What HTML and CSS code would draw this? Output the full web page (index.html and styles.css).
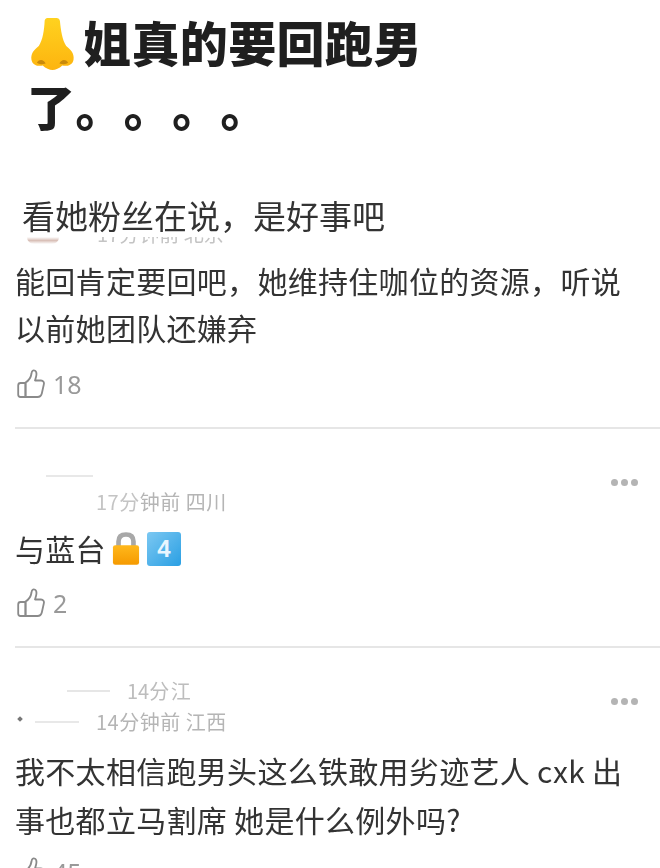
FILE: index.html
```html
<!DOCTYPE html>
<html lang="zh">
<head>
<meta charset="utf-8">
<title>评论截图</title>
<link rel="stylesheet" href="styles.css">
</head>
<body>
<svg class="defs" width="0" height="0" aria-hidden="true">
  <defs>
    <symbol id="thumb" viewBox="0 0 28 30">
      <path d="M8.5 13.5 C12 11.5 14 8 14.5 4.5 C14.8 1.8 16 1 17.5 1.5 C19.5 2.2 19.8 5 19 8 L18 11.5 H24 C26.3 11.5 27.4 13.2 26.8 15.5 L24.8 24.5 C24.2 27 22.8 28 20.5 28 H8.5 Z" fill="none" stroke="#8a8a8a" stroke-width="1.8" stroke-linejoin="round"/>
      <path d="M8.5 14 H3.5 C2 14 1.2 15 1.2 16.5 V25.5 C1.2 27 2 28 3.5 28 H8.5 Z" fill="none" stroke="#8a8a8a" stroke-width="1.8" stroke-linejoin="round"/>
    </symbol>
  </defs>
</svg>
<main class="page">
  <header class="post">
    <h1 class="title">
      <span class="title-line">
        <svg class="nose" viewBox="0 0 46 54" aria-hidden="true">
          <defs>
            <linearGradient id="noseFill" x1="0" y1="0" x2="0" y2="1">
              <stop offset="0" stop-color="#ffd21f"/>
              <stop offset="1" stop-color="#fdb40f"/>
            </linearGradient>
          </defs>
          <path d="M15 3 C15.5 1 17 0.5 18.5 0.5 H27 C29 0.5 30.3 1.5 30.6 3.5 C31.5 13 33 23 37 29 C42 33 45.5 37 44.5 43 C43.5 49 37 50 33 49 C30 52 26 53.5 23 53.5 C20 53.5 16 52 13 49 C9 50 2.5 49 1.5 43 C0.5 37 4 33 9 29 C13 23 14.5 13 15 3 Z" fill="url(#noseFill)"/>
          <path d="M7 46 C10 42 14 43 16 47 C12 48 9 48 7 46 Z M39 46 C36 42 32 43 30 47 C34 48 37 48 39 46 Z" fill="#c98a0c"/>
        </svg>
        <span>姐真的要回跑男</span>
      </span>
      <span class="title-line second">了。。。。</span>
    </h1>
    <p class="subtitle">看她粉丝在说&#xFF0C;是好事吧</p>
  </header>

  <section class="comment first">
    <div class="clipped">
      <span class="avatar-scrap"></span>
      <span class="clipped-meta">17分钟前 北京</span>
    </div>
    <p class="body">能回肯定要回吧&#xFF0C;她维持住咖位的资源&#xFF0C;听说<br>以前她团队还嫌弃</p>
    <div class="likes"><svg class="thumb"><use href="#thumb"/></svg><span>18</span></div>
  </section>

  <section class="comment second-comment">
    <div class="head">
      <span class="name-line"></span>
      <span class="menu"><i></i><i></i><i></i></span>
    </div>
    <div class="meta meta-sichuan"><span class="smudge">17分</span>钟前 四川</div>
    <p class="body short">与蓝台<svg class="lock" viewBox="0 0 30 36" aria-hidden="true">
        <defs>
          <linearGradient id="lockFill" x1="0" y1="0" x2="0" y2="1">
            <stop offset="0" stop-color="#ffb81c"/>
            <stop offset="1" stop-color="#f59a00"/>
          </linearGradient>
        </defs>
        <path d="M7 16 V10 C7 4.5 10 2.5 15 2.5 C20 2.5 23 4.5 23 10 V16" fill="none" stroke="#a8a8a8" stroke-width="5"/>
        <rect x="1" y="14" width="28" height="21" rx="2.5" fill="url(#lockFill)"/>
      </svg><span class="keycap">4</span></p>
    <div class="likes"><svg class="thumb"><use href="#thumb"/></svg><span>2</span></div>
  </section>

  <section class="comment third-comment">
    <div class="ghost-row">
      <span class="name-line ghost-line"></span>
      <span class="ghost-meta">14分 江</span>
      <span class="menu"><i></i><i></i><i></i></span>
    </div>
    <div class="meta-row">
      <span class="tick"></span>
      <span class="name-line meta-line"></span>
      <span class="meta">14分钟前 江西</span>
    </div>
    <p class="body">我不太相信跑男头这么铁敢用劣迹艺人 cxk 出<br>事也都立马割席 她是什么例外吗?</p>
    <div class="likes"><svg class="thumb"><use href="#thumb"/></svg><span>45</span></div>
  </section>
</main>
</body>
</html>
```

FILE: styles.css
```css
* {
  box-sizing: border-box;
}

html,
body {
  margin: 0;
  height: 868px;
  overflow: hidden;
  background: #fff;
}

.defs {
  position: absolute;
}

.page {
  height: 868px;
  overflow: hidden;
  font-family: "Noto Sans CJK SC", "Noto Sans", sans-serif;
  color: #333;
  text-spacing-trim: space-all;
  filter: blur(0.45px);
}

.post {
  padding: 9px 0 0 27px;
  height: 234px;
}

.title {
  margin: 0;
  font-size: 48px;
  line-height: 64px;
  font-weight: 900;
  letter-spacing: 0.4px;
  color: #1f1f1f;
}

.title-line {
  display: flex;
  align-items: center;
  white-space: nowrap;
}

.nose {
  width: 45px;
  height: 54px;
  margin: 6px 8px 0 3px;
  flex: none;
}

.second {
  margin-top: 0;
}

.subtitle {
  margin: 60px 0 0 -5px;
  font-size: 33px;
  line-height: 36px;
  font-weight: 400;
  color: #333;
}

.comment {
  margin-left: 15px;
  border-bottom: 2px solid #e6e6e6;
}

.first {
  height: 195px;
  padding-top: 3px;
}

.clipped {
  height: 7px;
  overflow: hidden;
  display: flex;
  align-items: flex-start;
}

.avatar-scrap {
  width: 32px;
  height: 7px;
  margin: 0 38px 0 12px;
  border-radius: 0 0 16px 16px;
  background: linear-gradient(#fff 0, #d9c0b8 50%, #fff 100%);
}

.clipped-meta {
  font-size: 20px;
  line-height: 20px;
  margin-top: -13px;
  color: #c4c4c4;
}

.body {
  margin: 0;
  font-size: 30px;
  line-height: 47px;
  letter-spacing: 0.3px;
  color: #333;
  white-space: nowrap;
}

.first .body {
  margin-top: 13px;
}

.short {
  display: flex;
  align-items: center;
  height: 47px;
}

.lock {
  width: 28px;
  height: 34px;
  margin: 0 7px 0 6px;
  flex: none;
}

.keycap {
  width: 34px;
  height: 34px;
  flex: none;
  border-radius: 3px;
  background: linear-gradient(135deg, #7cc8f2, #2a9fe3);
  color: #e8f6ff;
  font-family: "Liberation Sans", sans-serif;
  font-size: 24px;
  line-height: 34px;
  letter-spacing: 0;
  text-align: center;
  font-weight: 700;
}

.likes {
  display: flex;
  align-items: center;
  gap: 8px;
  margin: 18px 0 0 2px;
  height: 30px;
  font-family: "Noto Sans", sans-serif;
  font-size: 25px;
  line-height: 30px;
  color: #999;
}

.thumb {
  width: 28px;
  height: 30px;
  flex: none;
}

.second-comment {
  height: 219px;
  position: relative;
}

.head {
  height: 64px;
  padding-top: 44px;
  display: flex;
  justify-content: space-between;
}

.name-line {
  display: block;
  height: 2px;
  background: #e8e8e8;
}

.head .name-line {
  width: 47px;
  margin: 2px 0 0 31px;
}

.menu {
  display: flex;
  gap: 3px;
  margin-right: 22px;
  flex: none;
}

.menu i {
  display: block;
  width: 7px;
  height: 7px;
  border-radius: 50%;
  background: #b4b4b4;
}

.head .menu {
  margin-top: 6px;
}

.meta {
  font-size: 20px;
  line-height: 28px;
  letter-spacing: 0.5px;
  color: #b5b5b5;
  white-space: nowrap;
}

.meta-sichuan {
  margin: -5px 0 0 81px;
  height: 28px;
}

.smudge {
  color: #c4c4c4;
}

.second-comment .body {
  margin-top: 9px;
}

.second-comment .likes {
  margin-top: 16px;
}

.third-comment {
  border-bottom: 0;
}

.ghost-row {
  display: flex;
  align-items: center;
  height: 30px;
  margin-top: 28px;
  position: relative;
}

.ghost-line {
  width: 43px;
  margin-left: 52px;
  background: #e6e6e6;
}

.ghost-meta {
  margin-left: 17px;
  font-size: 20px;
  line-height: 30px;
  word-spacing: -3px;
  color: #bdbdbd;
  white-space: nowrap;
}

.ghost-row .menu {
  margin-left: auto;
  margin-top: 20px;
}

.meta-row {
  display: flex;
  align-items: center;
  height: 30px;
  margin-top: 1px;
}

.tick {
  width: 4px;
  height: 4px;
  margin: 0 0 6px 3px;
  background: #777;
  transform: rotate(45deg);
}

.meta-line {
  width: 44px;
  margin-left: 13px;
}

.meta-row .meta {
  margin-left: 17px;
}

.third-comment .body {
  margin-top: 9px;
  line-height: 49px;
}

.third-comment .likes {
  margin-top: 13px;
}
```
